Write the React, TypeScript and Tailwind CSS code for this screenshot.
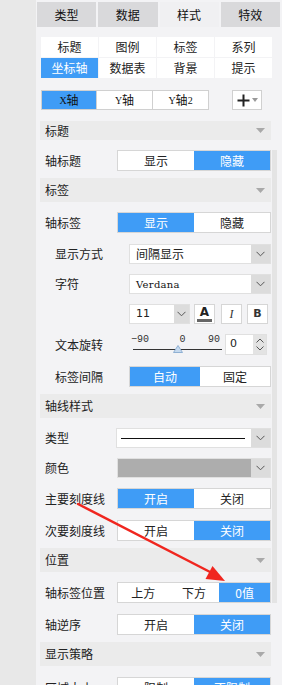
import type { ReactNode } from 'react';

const FONT = '"Noto Sans CJK SC", "Noto Sans", sans-serif';

function Chevron() {
  return (
    <svg width="9" height="6" viewBox="0 0 9 6" fill="none" stroke="#555" strokeWidth="1">
      <path d="M0.5 0.8 L4.5 4.8 L8.5 0.8" />
    </svg>
  );
}

function SectionHeader({ title, className = '' }: { title: string; className?: string }) {
  return (
    <div className={`flex items-center justify-between bg-[#ebebeb] pl-[5px] pr-[6px] text-[12px] text-[#222] ${className}`}>
      <span>{title}</span>
      <svg width="9" height="5" viewBox="0 0 9 5">
        <path d="M0 0 H9 L4.5 5 Z" fill="#a9a9a9" />
      </svg>
    </div>
  );
}

function Toggle({ options, active, className = '' }: { options: string[]; active: number; className?: string }) {
  return (
    <div className={`flex h-[21px] border border-[#d6d6d6] bg-white text-[12px] ${className}`}>
      {options.map((o, i) => (
        <div
          key={o}
          className={`flex flex-1 items-center justify-center ${i === active ? 'bg-[#3f9cf6] text-white' : 'text-[#222]'}`}
        >
          {o}
        </div>
      ))}
    </div>
  );
}

function Select({ children, className = '', fill = false }: { children?: ReactNode; className?: string; fill?: boolean }) {
  return (
    <div className={`flex h-[20px] border border-[#e0e0e0] ${fill ? 'bg-[#adadad]' : 'bg-white'} ${className}`}>
      <div className="flex flex-1 items-center px-[6px] text-[12px] text-[#222]">{children}</div>
      <div className="flex w-[19px] items-center justify-center bg-[#dcdcdc]">
        <Chevron />
      </div>
    </div>
  );
}

function Row({ label, sub = false, children, className = '' }: { label: string; sub?: boolean; children: ReactNode; className?: string }) {
  return (
    <div className={`flex items-center text-[12px] text-[#222] ${className}`}>
      <div className={sub ? 'w-[89px] pl-[15px]' : 'w-[77px] pl-[5px]'}>{label}</div>
      <div className="flex-1">{children}</div>
    </div>
  );
}

export default function App() {
  const tabs = ['类型', '数据', '样式', '特效'];
  const subTabs = ['标题', '图例', '标签', '系列', '坐标轴', '数据表', '背景', '提示'];

  return (
    <div className="flex h-[685px] w-[282px] overflow-hidden" style={{ fontFamily: FONT }}>
      <div className="w-[36px] shrink-0 bg-[#e8e8e8]" />
      <div className="relative flex-1 bg-[#f3f3f5]">
        {/* 顶部标签页 */}
        <div className="grid grid-cols-4 gap-[2px] pl-[1px] pr-[2px] pt-[2px]">
          {tabs.map((t, i) => (
            <div
              key={t}
              className={`flex h-[25px] items-center justify-center text-[12px] text-[#111] ${i === 2 ? 'bg-[#f0f0f2]' : 'bg-[#d9d9db]'}`}
            >
              {t}
            </div>
          ))}
        </div>

        <div className="w-[235px] pl-[4px]">
          {/* 子分类 */}
          <div className="ml-[1px] mt-[10px] grid w-[231px] grid-cols-4 gap-[1px]">
            {subTabs.map((t) => (
              <div
                key={t}
                className={`flex h-[20px] items-center justify-center text-[12px] ${t === '坐标轴' ? 'bg-[#3f9cf6] text-white' : 'bg-white text-[#222]'}`}
              >
                {t}
              </div>
            ))}
          </div>

          {/* 轴选择 */}
          <div className="ml-[1px] mt-[12px] flex h-[20px] items-stretch">
            <div className="flex w-[56px] items-center justify-center border border-[#d0d0d0] bg-[#3f9cf6] text-[12px] text-[#111]">
              <span className="font-['Liberation_Serif'] text-[10px]">X</span>轴
            </div>
            <div className="flex w-[56px] items-center justify-center border border-l-0 border-[#d0d0d0] bg-white text-[12px] text-[#111]">
              <span className="font-['Liberation_Serif'] text-[10px]">Y</span>轴
            </div>
            <div className="flex w-[56px] items-center justify-center border border-l-0 border-[#d0d0d0] bg-white text-[12px] text-[#111]">
              <span className="font-['Liberation_Serif'] text-[10px]">Y</span>轴<span className="font-['Liberation_Serif'] text-[10px]">2</span>
            </div>
            <div className="ml-[23px] flex w-[30px] items-center justify-center gap-[2px] border border-[#d0d0d0] bg-white">
              <svg width="13" height="13" viewBox="0 0 13 13">
                <path d="M6.5 0.5 V12.5 M0.5 6.5 H12.5" stroke="#222" strokeWidth="2" />
              </svg>
              <svg width="6" height="4" viewBox="0 0 6 4">
                <path d="M0 0 H6 L3 4 Z" fill="#999" />
              </svg>
            </div>
          </div>

          <SectionHeader title="标题" className="mt-[11px] h-[19px]" />
          <Row label="轴标题" className="mt-[10px]">
            <Toggle options={['显示', '隐藏']} active={1} />
          </Row>

          <SectionHeader title="标签" className="mt-[7px] h-[24px]" />
          <Row label="轴标签" className="mt-[10px]">
            <Toggle options={['显示', '隐藏']} active={0} />
          </Row>
          <Row label="显示方式" sub className="mt-[11px]">
            <Select>间隔显示</Select>
          </Row>
          <Row label="字符" sub className="mt-[10px]">
            <Select>
              <span className="font-['DejaVu_Serif'] text-[10px] tracking-[0.3px] text-[#111]">Verdana</span>
            </Select>
          </Row>
          <Row label="" sub className="mt-[10px]">
            <div className="flex items-center">
              <div className="flex h-[20px] w-[61px] border border-[#e0e0e0] bg-white">
                <div className="flex flex-1 items-center px-[6px] font-['DejaVu_Sans'] text-[11px]">11</div>
                <div className="flex w-[15px] items-center justify-center bg-[#dcdcdc]">
                  <Chevron />
                </div>
              </div>
              <div className="ml-[4px] flex h-[20px] w-[21px] flex-col items-center justify-center border border-[#d6d6d6] bg-white">
                <span className="font-['DejaVu_Sans'] text-[12px] font-bold leading-[11px] text-[#222]">A</span>
                <div className="mt-[1px] h-[3px] w-[15px] bg-[#666]" />
              </div>
              <div className="ml-[6px] flex h-[20px] w-[21px] items-center justify-center border border-[#d6d6d6] bg-white font-['Liberation_Serif'] text-[12px] italic text-[#333]">
                I
              </div>
              <div className="ml-[5px] flex h-[20px] w-[21px] items-center justify-center border border-[#d6d6d6] bg-white font-['DejaVu_Sans'] text-[11px] font-bold text-[#333]">
                B
              </div>
            </div>
          </Row>
          <Row label="文本旋转" sub className="mt-[10px]">
            <div className="flex items-center">
              <div className="relative h-[21px] w-[96px]">
                <div className="flex justify-between pl-[2px] pr-[5px] pt-[1px] font-['Liberation_Mono'] text-[10px] leading-[9px] text-[#333]">
                  <span>−90</span>
                  <span className="ml-[8px]">0</span>
                  <span>90</span>
                </div>
                <div className="ml-[4px] mt-[5px] h-[1px] w-[89px] bg-[#333]" />
                <svg className="absolute left-[44px] top-[11px]" width="10" height="8" viewBox="0 0 10 8">
                  <path d="M5 0.5 L9.5 7.5 H0.5 Z" fill="#c5d9ee" stroke="#8fb0d3" strokeWidth="1" />
                </svg>
              </div>
              <div className="flex h-[21px] w-[42px] border border-[#e0e0e0] bg-white">
                <div className="flex flex-1 items-center px-[4px] font-['DejaVu_Sans'] text-[11px]">0</div>
                <div className="flex w-[13px] flex-col items-center justify-center gap-[3px] bg-[#e3e3e3]">
                  <svg width="8" height="5" viewBox="0 0 8 5" fill="none" stroke="#555">
                    <path d="M0.5 4.5 L4 1 L7.5 4.5" />
                  </svg>
                  <svg width="8" height="5" viewBox="0 0 8 5" fill="none" stroke="#555">
                    <path d="M0.5 0.5 L4 4 L7.5 0.5" />
                  </svg>
                </div>
              </div>
            </div>
          </Row>
          <Row label="标签间隔" sub className="mt-[11px]">
            <Toggle options={['自动', '固定']} active={0} />
          </Row>

          <SectionHeader title="轴线样式" className="mt-[7px] h-[24px]" />
          <Row label="类型" className="mt-[10px]">
            <Select>
              <div className="-ml-[2px] h-[1px] w-[124px] bg-[#111]" />
            </Select>
          </Row>
          <Row label="颜色" className="mt-[10px]">
            <Select fill />
          </Row>
          <Row label="主要刻度线" className="mt-[10px]">
            <Toggle options={['开启', '关闭']} active={0} />
          </Row>
          <Row label="次要刻度线" className="mt-[11px]">
            <Toggle options={['开启', '关闭']} active={1} />
          </Row>

          <SectionHeader title="位置" className="mt-[7px] h-[24px]" />
          <Row label="轴标签位置" className="mt-[10px]">
            <Toggle options={['上方', '下方', '0值']} active={2} />
          </Row>
          <Row label="轴逆序" className="mt-[11px]">
            <Toggle options={['开启', '关闭']} active={1} />
          </Row>

          <SectionHeader title="显示策略" className="mt-[7px] h-[24px]" />
          <Row label="区域大小" className="mt-[11px]">
            <Toggle options={['限制', '不限制']} active={1} />
          </Row>
        </div>

        {/* 滚动条 */}
        <div className="absolute left-[236px] top-[150px] h-[453px] w-[5px] bg-[#e4e4e4]" />
      </div>

      {/* 红色标注箭头 */}
      <svg className="pointer-events-none absolute left-0 top-0" width="282" height="685" viewBox="0 0 282 685">
        <line x1="78" y1="504" x2="212" y2="573" stroke="#f0261f" strokeWidth="2.5" strokeLinecap="round" />
        <path d="M225 581 L205.5 579 L212.5 566 Z" fill="#f0261f" />
      </svg>
    </div>
  );
}
